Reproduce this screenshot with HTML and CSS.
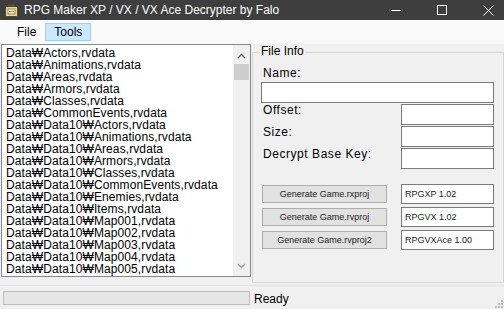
FILE: index.html
```html
<!DOCTYPE html>
<html>

<head>
    <meta charset="UTF-8">
    <title>RPG Maker XP / VX / VX Ace Decrypter by Falo</title>
    <link rel="stylesheet" href="styles.css">
</head>

<body>

    <div class="titlebar">
        <svg class="app-icon" width="13" height="13" viewBox="0 0 13 13">
            <rect x="3" y="0.5" width="7" height="3" fill="#6b4a1c" />
            <rect x="0.5" y="2.5" width="12" height="10" fill="#e9d79a" stroke="#5a4520" />
            <rect x="3" y="5" width="7" height="5" fill="#fff6d8" stroke="#8a6a30" stroke-width="0.8" />
            <line x1="4" y1="7.5" x2="9" y2="7.5" stroke="#8a6a30" stroke-width="0.8" />
        </svg>
        <span class="title">RPG Maker XP / VX / VX Ace Decrypter by Falo</span>
        <div class="controls">
            <span class="ctl">
                <svg width="10" height="10" viewBox="0 0 10 10"><line x1="0" y1="5.5" x2="10" y2="5.5" stroke="#fff" /></svg>
            </span>
            <span class="ctl">
                <svg width="10" height="10" viewBox="0 0 10 10"><rect x="0.5" y="0.5" width="9" height="9" fill="none" stroke="#fff" /></svg>
            </span>
            <span class="ctl">
                <svg width="11" height="11" viewBox="0 0 11 11"><path d="M0.5 0.5 L10.5 10.5 M10.5 0.5 L0.5 10.5" stroke="#fff" /></svg>
            </span>
        </div>
    </div>

    <div class="menubar">
        <span class="menu">File</span>
        <span class="menu active">Tools</span>
    </div>

    <div class="main">

        <div class="listbox">
            <ul class="files">
                <li>Data₩Actors,rvdata</li>
                <li>Data₩Animations,rvdata</li>
                <li>Data₩Areas,rvdata</li>
                <li>Data₩Armors,rvdata</li>
                <li>Data₩Classes,rvdata</li>
                <li>Data₩CommonEvents,rvdata</li>
                <li>Data₩Data10₩Actors,rvdata</li>
                <li>Data₩Data10₩Animations,rvdata</li>
                <li>Data₩Data10₩Areas,rvdata</li>
                <li>Data₩Data10₩Armors,rvdata</li>
                <li>Data₩Data10₩Classes,rvdata</li>
                <li>Data₩Data10₩CommonEvents,rvdata</li>
                <li>Data₩Data10₩Enemies,rvdata</li>
                <li>Data₩Data10₩Items,rvdata</li>
                <li>Data₩Data10₩Map001,rvdata</li>
                <li>Data₩Data10₩Map002,rvdata</li>
                <li>Data₩Data10₩Map003,rvdata</li>
                <li>Data₩Data10₩Map004,rvdata</li>
                <li>Data₩Data10₩Map005,rvdata</li>
            </ul>
            <div class="scrollbar">
                <svg class="arrow" width="9" height="6" viewBox="0 0 9 6"><path d="M1 5 L4.5 1.5 L8 5" fill="none" stroke="#606060" stroke-width="1.4" /></svg>
                <div class="thumb"></div>
                <svg class="arrow down" width="9" height="6" viewBox="0 0 9 6"><path d="M1 1 L4.5 4.5 L8 1" fill="none" stroke="#a0a0a0" stroke-width="1.4" /></svg>
            </div>
        </div>

        <div class="group">
            <span class="legend">File Info</span>

            <div class="label">Name:</div>
            <div class="box name-box"></div>

            <div class="field">
                <span class="label">Offset:</span>
                <div class="box small-box"></div>
            </div>
            <div class="field">
                <span class="label">Size:</span>
                <div class="box small-box"></div>
            </div>
            <div class="field">
                <span class="label">Decrypt Base Key:</span>
                <div class="box small-box"></div>
            </div>

            <div class="gen-list">
                <div class="gen-row">
                    <div class="gen-btn">Generate Game.rxproj</div>
                    <div class="box value">RPGXP 1.02</div>
                </div>
                <div class="gen-row">
                    <div class="gen-btn">Generate Game.rvproj</div>
                    <div class="box value">RPGVX 1.02</div>
                </div>
                <div class="gen-row">
                    <div class="gen-btn">Generate Game.rvproj2</div>
                    <div class="box value">RPGVXAce 1.00</div>
                </div>
            </div>
        </div>

    </div>

    <div class="statusbar">
        <div class="progress"></div>
        <span class="status">Ready</span>
        <svg class="grip" width="8" height="8" viewBox="0 0 8 8">
            <rect x="6" y="0" width="2" height="2" fill="#bdbdbd" />
            <rect x="3" y="3" width="2" height="2" fill="#bdbdbd" />
            <rect x="6" y="3" width="2" height="2" fill="#bdbdbd" />
            <rect x="0" y="6" width="2" height="2" fill="#bdbdbd" />
            <rect x="3" y="6" width="2" height="2" fill="#bdbdbd" />
            <rect x="6" y="6" width="2" height="2" fill="#bdbdbd" />
        </svg>
    </div>

</body>

</html>
```

FILE: styles.css
```css
* {
    margin: 0;
    padding: 0;
    box-sizing: border-box;
}

body {
    width: 504px;
    height: 309px;
    overflow: hidden;
    background-color: #f0f0f0;
    font-family: "Liberation Sans", Arial, sans-serif;
    font-size: 12px;
    color: #000;
}

/* title bar */
.titlebar {
    display: flex;
    align-items: center;
    height: 20px;
    background-color: #3e3e3e;
    color: #fff;
    overflow: hidden;
}

.app-icon {
    margin-left: 5px;
}

.title {
    margin-left: 6px;
    font-size: 12px;
    white-space: nowrap;
}

.controls {
    display: flex;
    margin-left: auto;
    margin-right: -7px;
}

.ctl {
    display: flex;
    align-items: center;
    justify-content: center;
    width: 46px;
    height: 20px;
}

/* menu */
.menubar {
    display: flex;
    height: 24px;
    padding: 3px 0 0 8px;
    background-color: #f9f9f9;
}

.menu {
    height: 18px;
    line-height: 16px;
    padding: 0 8px;
    border: 1px solid transparent;
}

.menu.active {
    background-color: #cce8ff;
    border-color: #99d1ff;
}

/* main */
.main {
    display: flex;
    height: 241px;
}

.listbox {
    display: flex;
    width: 252px;
    height: 233px;
    margin-left: 1px;
    border: 1px solid #828790;
    background-color: #fff;
}

.files {
    flex: 1;
    list-style: none;
    padding: 2px 0 0 4px;
    font-size: 12px;
    line-height: 12px;
    letter-spacing: 0.1px;
    white-space: nowrap;
    overflow: hidden;
}

.scrollbar {
    display: flex;
    flex-direction: column;
    align-items: center;
    width: 17px;
    background-color: #f0f0f0;
}

.arrow {
    margin-top: 8px;
}

.thumb {
    width: 15px;
    height: 16px;
    margin-top: 5px;
    background-color: #cdcdcd;
}

.arrow.down {
    margin-top: auto;
    margin-bottom: 7px;
}

/* group box */
.group {
    position: relative;
    width: 252px;
    height: 231px;
    margin: 8px 0 0 1px;
    padding: 13px 9px 0 8px;
    border: 1px solid #d5d5d5;
}

.legend {
    position: absolute;
    top: -9px;
    left: 7px;
    padding: 0 1px;
    line-height: 14px;
    background-color: #f0f0f0;
}

.label {
    line-height: 14px;
    padding-left: 2px;
    letter-spacing: 0.55px;
}

.box {
    border: 1px solid #7a7a7a;
    background-color: #fff;
}

.name-box {
    width: 233px;
    height: 21px;
    margin-top: 2px;
}

.field {
    display: flex;
    height: 21px;
    margin-top: 1px;
}

.field .label {
    line-height: 12px;
}

.small-box {
    width: 93px;
    height: 21px;
    margin-left: auto;
}

.gen-list {
    margin-top: 15px;
}

.gen-row {
    display: flex;
    align-items: center;
    height: 20px;
    margin-bottom: 3px;
}

.gen-btn {
    width: 125px;
    height: 18px;
    margin-left: 1px;
    line-height: 16px;
    text-align: center;
    font-size: 9px;
    color: #222;
    background-color: #e1e1e1;
    border: 1px solid #adadad;
}

.value {
    width: 93px;
    height: 20px;
    margin-left: auto;
    padding: 4px 0 0 3px;
    font-size: 9px;
    line-height: 10px;
    color: #222;
}

/* status bar */
.statusbar {
    display: flex;
    align-items: flex-start;
    height: 24px;
    border-top: 1px solid #e3e3e3;
}

.progress {
    width: 247px;
    height: 14px;
    margin: 5px 0 0 3px;
    background-color: #e6e6e6;
    border: 1px solid #bcbcbc;
}

.status {
    margin: 6px 0 0 4px;
    line-height: 14px;
}

.grip {
    margin: 14px 1px 0 auto;
}
```
